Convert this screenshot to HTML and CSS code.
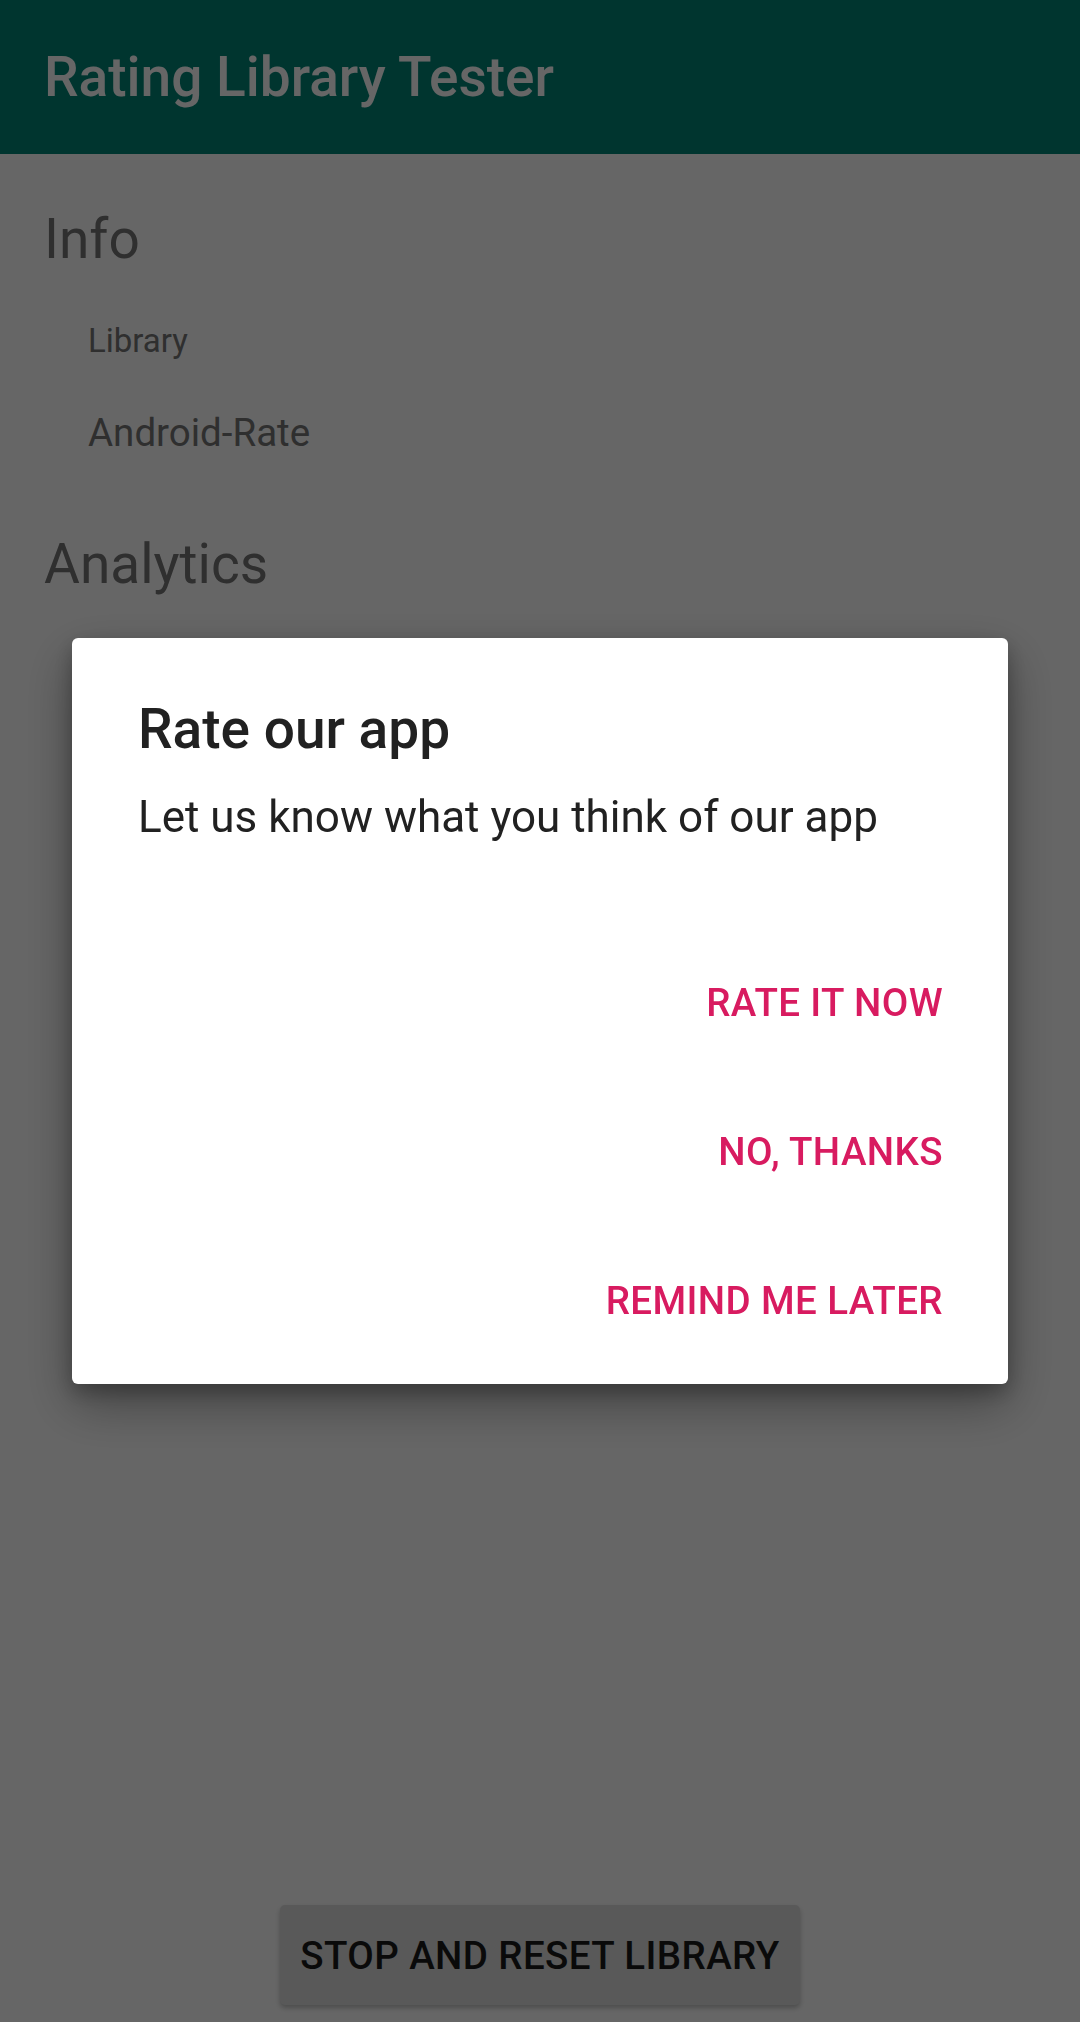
FILE: index.html
```html
<!DOCTYPE html>
<html>
<head>
<meta charset="utf-8">
<link rel="stylesheet" href="styles.css">
</head>
<body>
<div class="app">
  <header class="appbar"><span class="appbar-title">Rating Library Tester</span></header>
  <main class="content">
    <h2 class="section-title">Info</h2>
    <div class="info-label">Library</div>
    <div class="info-value">Android-Rate</div>
    <h2 class="section-title analytics">Analytics</h2>
  </main>
  <div class="bottom-bar">
    <button class="reset-btn">STOP AND RESET LIBRARY</button>
  </div>
</div>
<div class="scrim">
  <div class="dialog">
    <div class="dialog-title">Rate our app</div>
    <div class="dialog-message">Let us know what you think of our app</div>
    <div class="dialog-actions">
      <div class="dialog-btn">RATE IT NOW</div>
      <div class="dialog-btn">NO, THANKS</div>
      <div class="dialog-btn">REMIND ME LATER</div>
    </div>
  </div>
</div>
</body>
</html>
```
FILE: styles.css
```css
* { box-sizing: border-box; }
html, body { margin: 0; padding: 0; }
body {
  width: 1080px;
  height: 2022px;
  font-family: Roboto, "Noto Sans", sans-serif;
  background: #ffffff;
  overflow: hidden;
}
.app {
  height: 2022px;
  display: flex;
  flex-direction: column;
}
.appbar {
  height: 154px;
  background: #008577;
  display: flex;
  align-items: center;
  padding-left: 44px;
}
.appbar-title {
  color: #ffffff;
  font-size: 55px;
  font-weight: 500;
  line-height: 66px;
}
.content {
  flex: 1;
  padding: 52px 44px 0;
  color: #757575;
}
.section-title {
  margin: 0;
  font-weight: 400;
  font-size: 55px;
  line-height: 66px;
}
.info-label {
  margin: 46px 0 0 44px;
  font-size: 33px;
  line-height: 46px;
}
.info-value {
  margin: 43px 0 0 44px;
  font-size: 38.5px;
  line-height: 52px;
}
.section-title.analytics {
  margin-top: 72px;
}
.bottom-bar {
  display: flex;
  justify-content: center;
  padding-bottom: 17px;
}
.reset-btn {
  width: 520px;
  height: 100px;
  border: none;
  border-radius: 5px;
  background: #dedede;
  color: #1a1a1a;
  font-family: Roboto, sans-serif;
  font-size: 38.5px;
  font-weight: 500;
  letter-spacing: 0.4px;
  box-shadow: 0 3px 5px rgba(0,0,0,0.25);
}
.scrim {
  position: fixed;
  inset: 0;
  background: rgba(0,0,0,0.6);
  display: flex;
  align-items: center;
  justify-content: center;
}
.dialog {
  width: 936px;
  height: 746px;
  background: #ffffff;
  border-radius: 6px;
  box-shadow: 0 20px 50px rgba(0,0,0,0.35), 0 8px 20px rgba(0,0,0,0.25);
  padding: 58px 65px 9px 66px;
  display: flex;
  flex-direction: column;
}
.dialog-title {
  color: #212121;
  font-size: 55px;
  font-weight: 500;
  line-height: 66px;
}
.dialog-message {
  margin-top: 27px;
  color: #212121;
  font-size: 44px;
  line-height: 56px;
}
.dialog-actions {
  margin-top: 83px;
  display: flex;
  flex-direction: column;
  align-items: flex-end;
}
.dialog-btn {
  height: 149px;
  line-height: 149px;
  color: #D81B60;
  font-size: 38.5px;
  font-weight: 500;
  letter-spacing: 0.4px;
}
```
